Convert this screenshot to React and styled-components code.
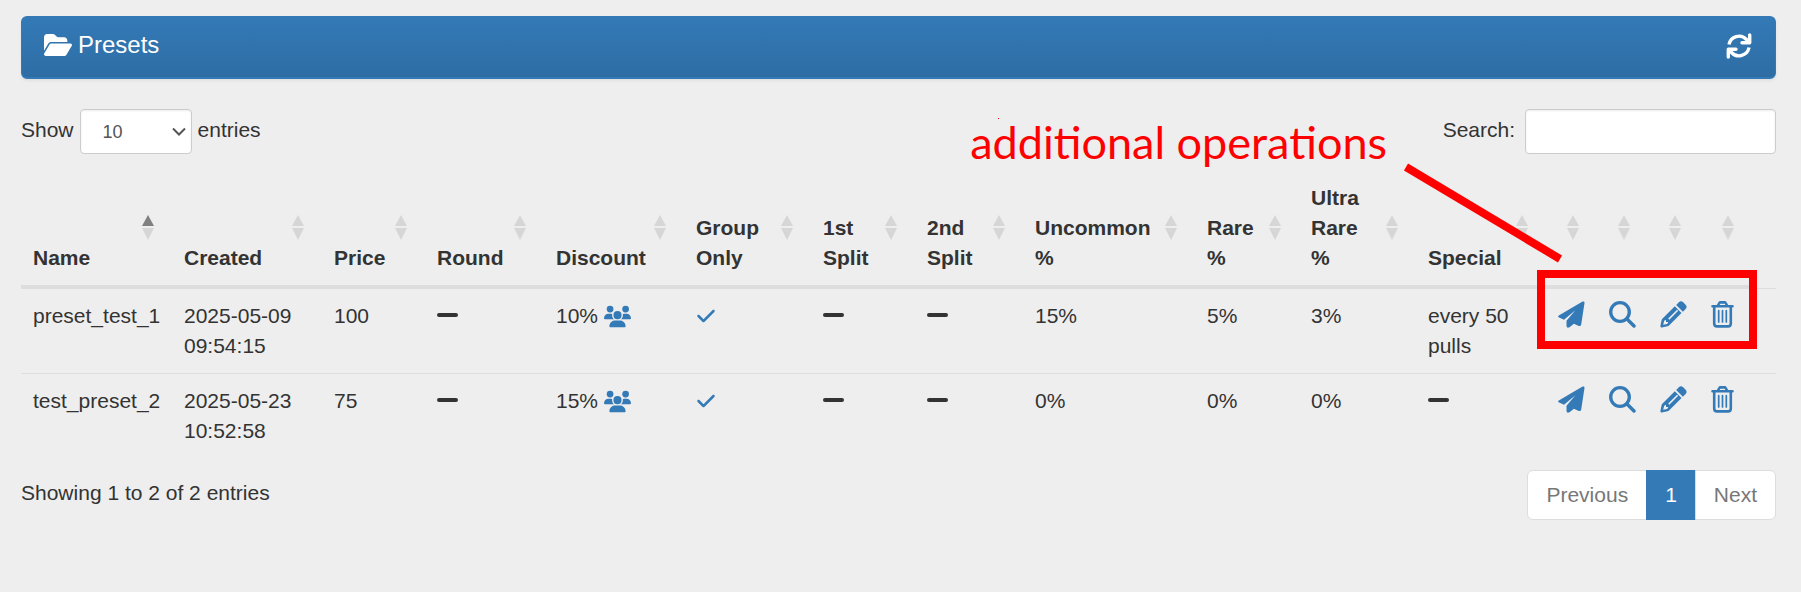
import React from "react"
import styled, { createGlobalStyle } from "styled-components"
import { FaCheck, FaFolderOpen, FaUsers } from "react-icons/fa6"

const GlobalStyle = createGlobalStyle`
  * {
    box-sizing: border-box;
  }
  body {
    margin: 0;
    background: #eee;
    color: #333;
    font-family: "Liberation Sans", Arial, sans-serif;
    font-size: 21px;
    line-height: 30px;
  }
`

const Page = styled.main`
  position: relative;
  padding: 16px 25px 16px 21px;
`

const Heading = styled.header`
  display: flex;
  justify-content: space-between;
  align-items: center;
  padding: 14px 23px 16px 22px;
  color: #fff;
  background-image: linear-gradient(to bottom, #337ab7, #2e6da4);
  border: 1px solid #337ab7;
  border-bottom-width: 2px;
  border-radius: 6px;
  box-shadow: 0 2px 3px rgba(0, 0, 0, 0.06);
`

const Title = styled.h1`
  display: flex;
  align-items: flex-start;
  gap: 6px;
  height: 30px;
  margin: 0;
  font-size: 24px;
  font-weight: 400;
  line-height: 28px;
`

const IconButton = styled.button`
  display: block;
  padding: 0;
  border: 0;
  background: none;
  color: ${(props) => props.$color || "#337ab7"};
  cursor: pointer;
  svg {
    display: block;
  }
`

const Toolbar = styled.div`
  display: flex;
  justify-content: space-between;
  margin: 30px 0 20px;
`

const Label = styled.label`
  display: flex;
  align-items: center;
  gap: ${(props) => props.$gap}px;
  height: 42px;
`

const fieldStyle = `
  height: 45px;
  border: 1px solid #ccc;
  border-radius: 4px;
  background-color: #fff;
  box-shadow: inset 0 1px 2px rgba(0, 0, 0, 0.08);
  color: #555;
  font-family: inherit;
  font-size: 18px;
`

const SelectWrap = styled.span`
  display: grid;
  align-items: center;
  height: 45px;
  align-self: flex-start;
  > * {
    grid-area: 1 / 1;
  }
  svg {
    justify-self: end;
    margin-right: 6px;
    pointer-events: none;
  }
`

const Select = styled.select`
  ${fieldStyle}
  width: 112px;
  padding: 0 22px;
  appearance: none;
`

const SearchInput = styled.input`
  ${fieldStyle}
  align-self: flex-start;
  width: 251px;
  padding: 8px 18px;
`

const Table = styled.table`
  width: 100%;
  table-layout: fixed;
  border-collapse: separate;
  border-spacing: 0;
`

const HeadCell = styled.th`
  position: relative;
  padding: 12px;
  padding-right: ${(props) => (props.$sortable ? 38 : 0)}px;
  border-bottom: ${(props) => (props.$sortable ? 4 : 1)}px solid #ddd;
  text-align: left;
  vertical-align: bottom;
`

const SortMark = styled.svg`
  position: absolute;
  top: 43px;
  right: 18px;
`

const Cell = styled.td`
  padding: 12px ${(props) => (props.$action ? 0 : 12)}px 12px 12px;
  border-top: ${(props) => (props.$first ? 0 : 1)}px solid #ddd;
  vertical-align: top;
`

const CellLine = styled.span`
  display: flex;
  align-items: center;
  gap: 6px;
  height: 30px;
`

const Footer = styled.footer`
  display: flex;
  justify-content: space-between;
  align-items: flex-start;
  margin-top: 12px;
`

const Info = styled.div`
  padding-top: 8px;
`

const Pagination = styled.nav`
  display: flex;
`

const PageButton = styled.button`
  height: 50px;
  padding: 0 18px;
  border: 1px solid ${(props) => (props.$active ? "#337ab7" : "#ddd")};
  background: ${(props) => (props.$active ? "#337ab7" : "#fff")};
  color: ${(props) => (props.$active ? "#fff" : "#777")};
  font: inherit;
  &:not(:first-child) {
    margin-left: -1px;
  }
  &:first-child {
    border-radius: 6px 0 0 6px;
  }
  &:last-child {
    border-radius: 0 6px 6px 0;
  }
`

const Note = styled.p`
  position: absolute;
  top: 115px;
  right: 414px;
  margin: 0;
  color: #f00;
  font-family: Lato, sans-serif;
  font-size: 45px;
  line-height: 54px;
  white-space: nowrap;
`

const Pointer = styled.svg`
  position: absolute;
  top: 110px;
  right: 231px;
  pointer-events: none;
`

const Highlight = styled.div`
  position: absolute;
  top: 270px;
  right: 44px;
  width: 220px;
  height: 79px;
  border: 8px solid #f00;
  pointer-events: none;
`

const columns = [
  { label: "Name", width: 151, sorted: true },
  { label: "Created", width: 150 },
  { label: "Price", width: 103 },
  { label: "Round", width: 119 },
  { label: "Discount", width: 140 },
  { label: "Group Only", width: 127 },
  { label: "1st Split", width: 104 },
  { label: "2nd Split", width: 108 },
  { label: "Uncommon %", width: 172 },
  { label: "Rare %", width: 104 },
  { label: "Ultra Rare %", width: 117 },
  { label: "Special", width: 130 },
  { label: "", width: 51 },
  { label: "", width: 51 },
  { label: "", width: 51 },
  { label: "", width: 53 },
]

const presets = [
  {
    name: "preset_test_1",
    created: "2025-05-09 09:54:15",
    price: 100,
    discount: 10,
    uncommon: 15,
    rare: 5,
    ultra: 3,
    special: "every 50 pulls",
  },
  {
    name: "test_preset_2",
    created: "2025-05-23 10:52:58",
    price: 75,
    discount: 15,
    uncommon: 0,
    rare: 0,
    ultra: 0,
  },
]

const Svg = ({ children, ...rest }) => (
  <svg width="27" height="27" viewBox="0 0 27 27" fill="currentColor" aria-hidden="true" {...rest}>
    {children}
  </svg>
)

const RefreshIcon = () => (
  <Svg width="26" height="26" viewBox="0 0 26 26" fill="none" stroke="currentColor">
    <path d="M3 11.500A10.200 10.200 0 0 1 20.500 6.500L22.500 8.500M23 14.500A10.200 10.200 0 0 1 5.500 19.500L3.500 17.500" strokeWidth="3.400" />
    <path d="M23.700 2V9.700H16M2.300 24V16.300H10" strokeWidth="3.400" strokeLinecap="round" strokeLinejoin="round" />
  </Svg>
)

const SendIcon = () => (
  <Svg>
    <path d="M.6 16.300Q-.4 15.400.8 14.500L24.600.6Q26.700-.2 26.500 2L23.200 23.500Q22.800 25.700 20.800 24.900L15.900 22.700 11.500 26.300Q8.800 27.500 8.500 25V19.700L17.400 9.200 6 18.700z" />
  </Svg>
)

const SearchIcon = () => (
  <Svg fill="none" stroke="currentColor">
    <circle cx="11" cy="11" r="9.300" strokeWidth="3.300" />
    <path d="M18 18 25 25" strokeWidth="3.400" strokeLinecap="round" />
  </Svg>
)

const PencilIcon = () => (
  <Svg>
    <path fillRule="evenodd" d="M2.300 17.800 14.800 5.300 21.500 12 9 24.500Q8.400 25.100 7.500 25.300L1.800 26.500Q.2 26.800.4 25.100L1.500 19.400Q1.700 18.400 2.300 17.800zM4.200 19.800 3.200 23.800 7.200 22.900 8.300 20.900H6V18.700zM17.100 8.700 8.200 17.600 9.300 18.700 18.200 9.800z" />
    <path d="M16.200 3.900 18.900 1.200Q21-.6 23.100 1.300L25.600 3.800Q27.500 5.900 25.600 8L22.900 10.700z" />
  </Svg>
)

const TrashIcon = () => (
  <Svg width="24" viewBox="0 0 24 27" fill="none" stroke="currentColor" strokeLinecap="round" strokeLinejoin="round">
    <path d="M1.500 5.200H21.500M6.700 5 8.300 2Q8.600 1.400 9.400 1.400H13.600Q14.400 1.400 14.700 2L16.300 5M3.200 6V22.500Q3.200 25.400 6 25.400H17Q19.800 25.400 19.800 22.500V6" strokeWidth="2.600" />
    <path d="M7.700 9.700V20.900M11.500 9.700V20.900M15.300 9.700V20.900" strokeWidth="1.700" />
  </Svg>
)

const Dash = () => (
  <Svg width="22" height="22" viewBox="0 0 22 22">
    <rect x="0" y="8" width="21" height="4" rx="2" />
  </Svg>
)

const actions = [
  { label: "Send", icon: <SendIcon /> },
  { label: "View", icon: <SearchIcon /> },
  { label: "Edit", icon: <PencilIcon /> },
  { label: "Delete", icon: <TrashIcon /> },
]

const PresetRow = ({ preset, first }) => {
  const line = (content) => <CellLine>{content}</CellLine>
  const cells = [
    preset.name,
    preset.created,
    preset.price,
    line(<Dash />),
    line(
      <>
        {preset.discount}% <FaUsers size={27} color="#337ab7" />
      </>
    ),
    line(<FaCheck size={20} color="#337ab7" />),
    line(<Dash />),
    line(<Dash />),
    `${preset.uncommon}%`,
    `${preset.rare}%`,
    `${preset.ultra}%`,
    preset.special || line(<Dash />),
  ]
  return (
    <tr>
      {cells.map((cell, idx) => (
        <Cell key={idx} $first={first}>
          {cell}
        </Cell>
      ))}
      {actions.map(({ label, icon }) => (
        <Cell key={label} $first={first} $action>
          <IconButton type="button" aria-label={label}>
            {icon}
          </IconButton>
        </Cell>
      ))}
      <Cell $first={first} $action />
    </tr>
  )
}

const App = () => (
  <Page>
    <GlobalStyle />
    <Heading>
      <Title>
        <FaFolderOpen size={28} /> Presets
      </Title>
      <IconButton type="button" $color="#fff" aria-label="Refresh">
        <RefreshIcon />
      </IconButton>
    </Heading>

    <Toolbar>
      <Label $gap={6}>
        Show
        <SelectWrap>
          <Select defaultValue="10">
            <option>10</option>
            <option>25</option>
            <option>50</option>
          </Select>
          <svg width="14" height="9" viewBox="0 0 14 9" fill="none" aria-hidden="true">
            <path d="M1 1.500 7 7.500 13 1.500" stroke="#555" strokeWidth="2" />
          </svg>
        </SelectWrap>
        entries
      </Label>
      <Label $gap={10}>
        Search:
        <SearchInput type="search" />
      </Label>
    </Toolbar>

    <Table>
      <colgroup>
        {columns.map(({ width }, idx) => (
          <col key={idx} width={width} />
        ))}
        <col width={24} />
      </colgroup>
      <thead>
        <tr>
          {columns.map(({ label, sorted }, idx) => (
            <HeadCell key={idx} $sortable>
              {label}
              <SortMark width="12" height="26" viewBox="0 0 12 26" aria-hidden="true">
                <path d="M6 1 12 12H0z" fill={sorted ? "#808080" : "#d6d6d6"} />
                <path d="M0 14h12L6 26z" fill="#d6d6d6" />
              </SortMark>
            </HeadCell>
          ))}
          <HeadCell />
        </tr>
      </thead>
      <tbody>
        {presets.map((preset, idx) => (
          <PresetRow key={preset.name} preset={preset} first={idx === 0} />
        ))}
      </tbody>
    </Table>

    <Footer>
      <Info>Showing 1 to 2 of 2 entries</Info>
      <Pagination aria-label="Pages">
        <PageButton type="button">Previous</PageButton>
        <PageButton type="button" $active>
          1
        </PageButton>
        <PageButton type="button">Next</PageButton>
      </Pagination>
    </Footer>

    <Note>additional operations</Note>
    <Pointer width="572" height="155" viewBox="0 0 572 155" aria-hidden="true">
      <rect x="0" y="8" width="1" height="1" fill="#f00" />
      <path d="M408 57 562 149" stroke="#f00" strokeWidth="8" />
    </Pointer>
    <Highlight />
  </Page>
)

export default App
